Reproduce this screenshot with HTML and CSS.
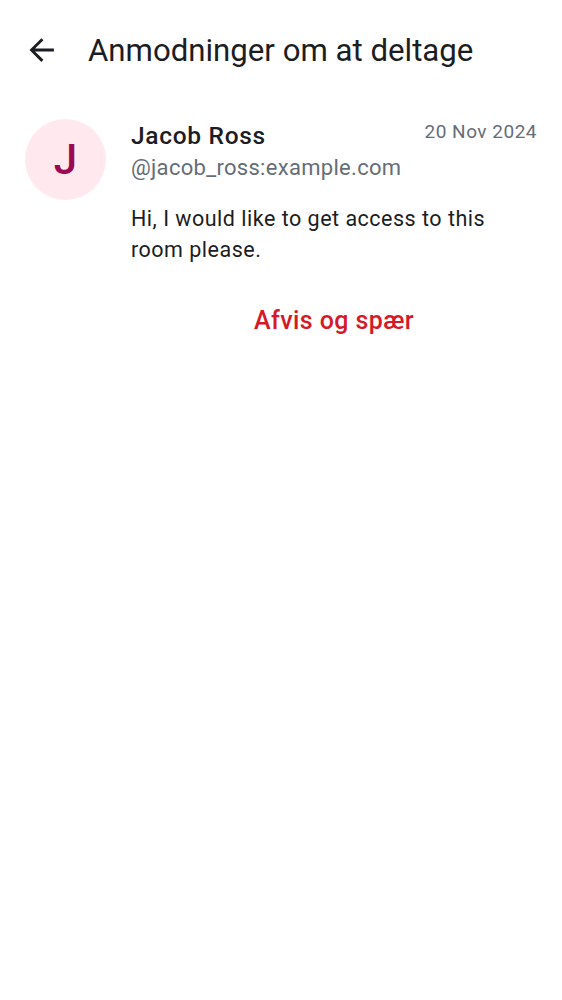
FILE: index.html
```html
<!DOCTYPE html>
<html lang="da">
<head>
<meta charset="utf-8">
<link rel="stylesheet" href="styles.css">
</head>
<body>
<header class="topbar">
  <button class="back" aria-label="Tilbage">
    <svg width="38" height="38" viewBox="0 0 24 24"><path d="M19.5 11.1H7.6l5.3-5.3-1.3-1.3L4.1 12l7.5 7.5 1.3-1.3-5.3-5.3h11.9z" fill="#1b1d22"/></svg>
  </button>
  <h1 class="title">Anmodninger om at deltage</h1>
</header>
<main class="list">
  <div class="request">
    <div class="avatar">J</div>
    <div class="content">
      <div class="head">
        <div class="names">
          <div class="name">Jacob Ross</div>
          <div class="handle">@jacob_ross:example.com</div>
        </div>
        <div class="date">20 Nov 2024</div>
      </div>
      <p class="message">Hi, I would like to get access to this room please.</p>
      <div class="actions">
        <button class="decline">Afvis og spær</button>
      </div>
    </div>
  </div>
</main>
</body>
</html>
```
FILE: styles.css
```css
html, body {
  margin: 0;
  padding: 0;
  background: #ffffff;
}
body {
  font-family: Roboto, "Noto Sans", sans-serif;
  color: #1b1d22;
}
.topbar {
  display: flex;
  align-items: center;
  height: 100px;
  padding-left: 23px;
}
.back {
  border: 0;
  background: none;
  padding: 0;
  width: 38px;
  height: 38px;
  display: flex;
  align-items: center;
  justify-content: center;
  margin-right: 27px;
}
.back svg { display: block; }
.title {
  margin: 0;
  font-size: 31.2px;
  font-weight: 400;
  letter-spacing: 0;
  color: #1b1d22;
}
.request {
  display: flex;
  padding: 19px 25px 0 25px;
  gap: 25px;
}
.avatar {
  flex: none;
  width: 81px;
  height: 81px;
  border-radius: 50%;
  background: #ffe8ee;
  color: #9b0a50;
  font-size: 42px;
  font-weight: 500;
  display: flex;
  align-items: center;
  justify-content: center;
}
.content {
  flex: 1;
  min-width: 0;
}
.head {
  display: flex;
  justify-content: space-between;
  align-items: flex-start;
}
.name {
  font-size: 24.5px;
  font-weight: 500;
  line-height: 33px;
  letter-spacing: 0.7px;
  color: #1b1d22;
}
.handle {
  font-size: 22px;
  line-height: 32px;
  color: #656d77;
  letter-spacing: 0.3px;
}
.date {
  font-size: 19px;
  line-height: 26px;
  color: #656d77;
  letter-spacing: 0.5px;
}
.message {
  margin: 19px 0 0 0;
  font-size: 21.5px;
  line-height: 31px;
  letter-spacing: 0.5px;
  color: #1b1d22;
}
.actions {
  display: flex;
  justify-content: center;
  margin-top: 40px;
}
.decline {
  border: 0;
  background: none;
  padding: 0;
  font-family: inherit;
  font-size: 25px;
  font-weight: 500;
  letter-spacing: 0.4px;
  color: #d51928;
  line-height: 32px;
}
```
